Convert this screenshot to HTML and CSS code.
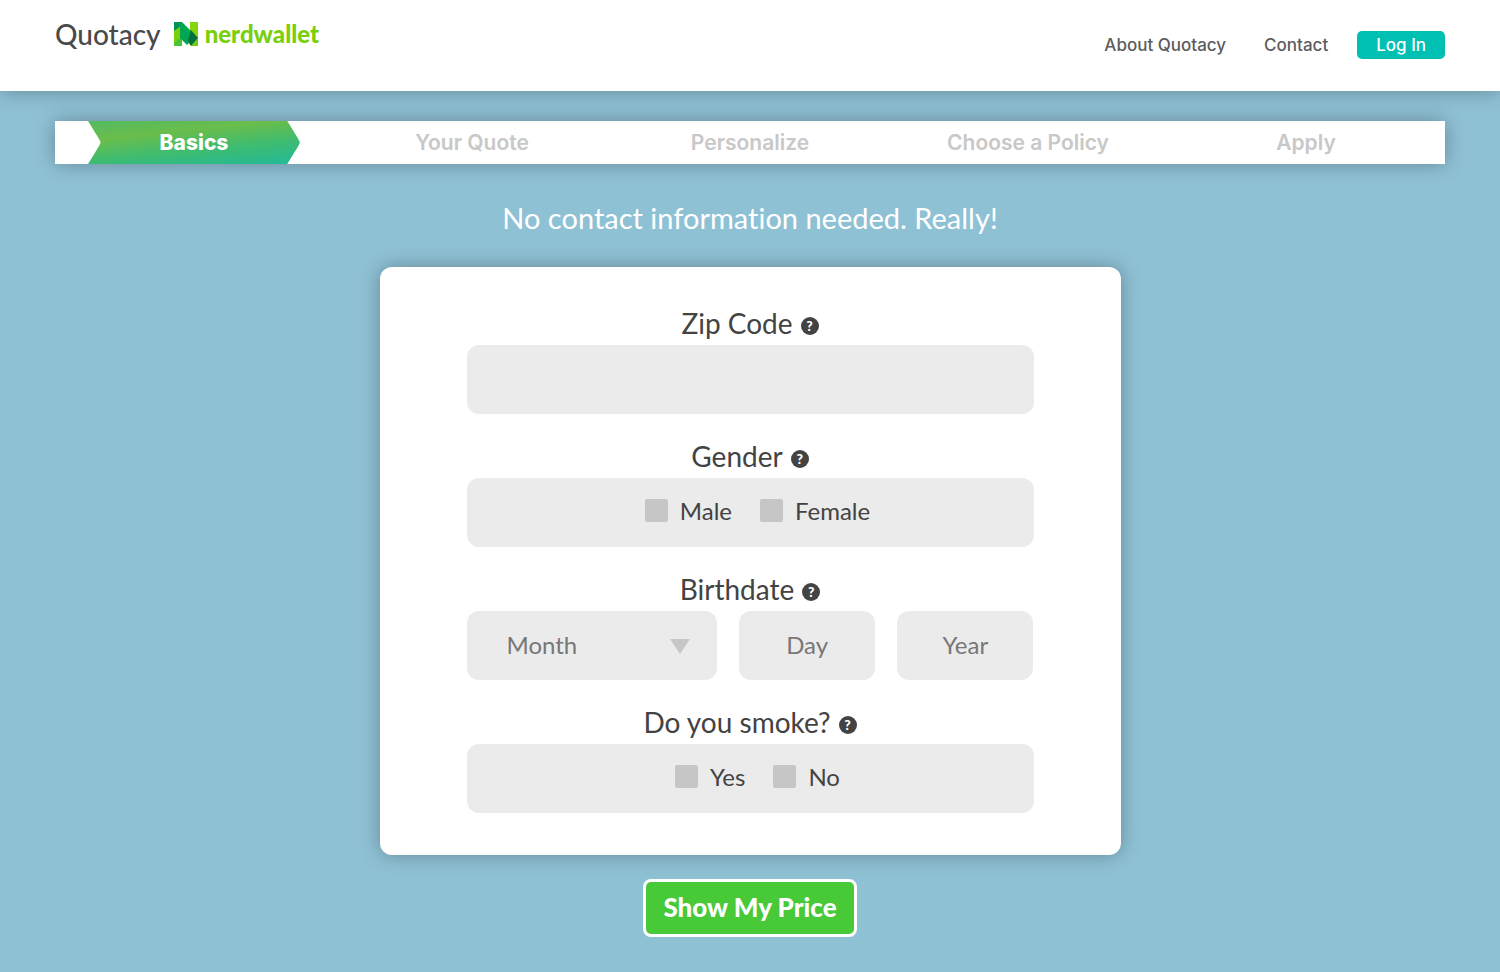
FILE: index.html
```html
<!DOCTYPE html>
<html lang="en">
<head>
  <meta charset="UTF-8" />
  <meta name="viewport" content="width=device-width, initial-scale=1" />
  <title>Quotacy - Basics</title>
  <link rel="stylesheet" href="styles.css">
</head>
<body>
  <header class="site-header">
    <a href="#" class="logo">
      <span class="logo-quotacy">Quotacy</span>
      <svg class="logo-mark" viewBox="0 0 24 24" aria-hidden="true">
        <path d="M0 0h8v24H0z" fill="#78cf0a" />
        <path d="M0 0h8v3L0 9z" fill="#00945a" />
        <path d="M0 24v-3l8-7v10z" fill="#4cc336" />
        <path d="M16 0h8v24h-8z" fill="#84d60b" />
        <path d="M8 0l9 9v10l-4 4-5-5-2-2V3z" fill="#00a651" />
        <path d="M17 8l7 8-6 7h-2l-2-5z" fill="#00703f" />
        <path d="M24 16v8h-7z" fill="#6ccb1c" />
      </svg>
      <span class="logo-nerdwallet">nerdwallet</span>
    </a>
    <nav class="main-nav">
      <a href="#">About Quotacy</a>
      <a href="#">Contact</a>
      <a href="#" class="login-link">Log In</a>
    </nav>
  </header>

  <main>
    <ol class="steps">
      <li class="active"><span>Basics</span></li>
      <li>Your Quote</li>
      <li>Personalize</li>
      <li>Choose a Policy</li>
      <li>Apply</li>
    </ol>

    <h1>No contact information needed. Really!</h1>

    <form id="quoteForm">
      <div class="card">
        <div class="field">
          <div class="field-title">
            <label for="zipInput">Zip Code</label>
            <button type="button" class="help" aria-label="Help with zip code">?</button>
          </div>
          <input type="text" id="zipInput" name="zip" class="box" />
        </div>

        <div class="field" role="radiogroup" aria-labelledby="genderTitle">
          <div class="field-title">
            <span id="genderTitle">Gender</span>
            <button type="button" class="help" aria-label="Help with gender">?</button>
          </div>
          <div class="box choices">
            <label><input type="radio" name="gender" value="male" /> Male</label>
            <label><input type="radio" name="gender" value="female" /> Female</label>
          </div>
        </div>

        <div class="field">
          <div class="field-title">
            <label for="monthSelect">Birthdate</label>
            <button type="button" class="help" aria-label="Help with birthdate">?</button>
          </div>
          <div class="birthdate">
            <div class="select-wrap">
              <select id="monthSelect" name="month" class="box">
                <option value="">Month</option>
                <option>January</option>
                <option>February</option>
                <option>March</option>
                <option>April</option>
                <option>May</option>
                <option>June</option>
                <option>July</option>
                <option>August</option>
                <option>September</option>
                <option>October</option>
                <option>November</option>
                <option>December</option>
              </select>
            </div>
            <input type="text" name="day" class="box" placeholder="Day" aria-label="Day" />
            <input type="text" name="year" class="box" placeholder="Year" aria-label="Year" />
          </div>
        </div>

        <div class="field" role="radiogroup" aria-labelledby="smokeTitle">
          <div class="field-title">
            <span id="smokeTitle">Do you smoke?</span>
            <button type="button" class="help" aria-label="Help with smoking">?</button>
          </div>
          <div class="box choices">
            <label><input type="radio" name="smoke" value="yes" /> Yes</label>
            <label><input type="radio" name="smoke" value="no" /> No</label>
          </div>
        </div>
      </div>

      <button type="submit" class="submit">Show My Price</button>
    </form>
  </main>
</body>
</html>
```
FILE: styles.css
```css
* {
  box-sizing: border-box;
}
body {
  margin: 0;
  min-height: 100vh;
  background: #8fc1d5;
  color: #434343;
  font-family: Lato, sans-serif;
  font-variant-ligatures: none;
}
a {
  text-decoration: none;
}

/* header */
.site-header {
  display: flex;
  justify-content: space-between;
  align-items: flex-start;
  padding: 16px 55px 32px;
  background: #fff;
  box-shadow: 0 0 20px rgba(0, 0, 0, 0.3);
}
.logo {
  display: flex;
  align-items: center;
  line-height: 36px;
}
.logo-quotacy {
  color: #4a4a4c;
  font-size: 28px;
  font-weight: 500;
}
.logo-mark {
  width: 24px;
  height: 24px;
  margin: 0 7px 0 13px;
}
.logo-nerdwallet {
  color: #78cf0a;
  font-size: 24px;
  font-weight: 900;
}
.main-nav {
  display: flex;
  align-items: center;
  padding-top: 15px;
  font-family: Inter, sans-serif;
  font-size: 17px;
  font-weight: 500;
  line-height: 28px;
}
.main-nav a {
  margin-left: 38px;
  color: #5c5c5c;
}
.main-nav .login-link {
  margin-left: 29px;
  padding: 0 19px;
  border-radius: 5px;
  background: #00bfb3;
  color: #fff;
}

/* progress steps */
.steps {
  display: grid;
  grid-template-columns: repeat(5, 1fr);
  margin: 30px 55px 0;
  padding: 0;
  list-style: none;
  background: #fff;
  box-shadow: 0 0 20px rgba(0, 0, 0, 0.3);
  color: #c8c8c8;
  font-family: Inter, sans-serif;
  font-size: 21px;
  font-weight: 600;
  line-height: 43px;
  text-align: center;
}
.steps .active {
  padding: 0 33px;
  color: #fff;
  font-weight: 800;
}
.steps .active span {
  display: block;
  background: linear-gradient(174deg, #52bb62 0, #6abd4b 30%, #3fbc70 62%, #22b998 100%);
  clip-path: polygon(0 0, 94% 0, 99% 40%, 100% 50%, 99% 60%, 94% 100%, 0 100%, 5% 60%, 6% 50%, 5% 40%);
}

h1 {
  margin: 35px 0 31px;
  color: #fff;
  font-size: 29px;
  font-weight: 400;
  line-height: 37px;
  text-align: center;
}

/* form */
#quoteForm {
  display: flex;
  flex-direction: column;
  align-items: center;
  padding: 0 20px 35px;
}
.card {
  width: 100%;
  max-width: 741px;
  padding: 38px 87px 42px;
  border-radius: 12px;
  background: #fff;
  box-shadow: 0 0 20px rgba(0, 0, 0, 0.3);
}
.field + .field {
  margin-top: 24px;
}
.field-title {
  display: flex;
  justify-content: center;
  align-items: center;
  gap: 8px;
  padding-bottom: 3px;
  font-size: 28px;
  line-height: 37px;
}
.help {
  width: 18px;
  height: 18px;
  margin-top: 5px;
  padding: 0;
  border: none;
  border-radius: 50%;
  background: #434343;
  color: #fff;
  font-family: Lato, sans-serif;
  font-size: 14px;
  font-weight: 900;
  line-height: 18px;
  cursor: pointer;
}
.box {
  display: block;
  width: 100%;
  height: 69px;
  border: none;
  border-radius: 12px;
  background: #ebebeb;
  color: #434343;
  font-family: Lato, sans-serif;
  font-size: 24px;
  text-align: center;
}
input.box,
select.box {
  padding-bottom: 3px;
}
.box::placeholder {
  color: #777;
}
.choices {
  display: flex;
  justify-content: center;
  align-items: center;
  gap: 28px;
  padding: 0 0 4px 15px;
}
.choices label {
  display: flex;
  align-items: center;
  gap: 12px;
}
.choices input {
  appearance: none;
  width: 23px;
  height: 23px;
  margin: 0;
  border-radius: 2px;
  background: #c6c6c6;
}
.choices input:checked {
  background: #47c938;
}
.birthdate {
  display: grid;
  grid-template-columns: 250fr 136fr 136fr;
  gap: 22px;
}
.select-wrap {
  position: relative;
}
.select-wrap select {
  appearance: none;
  padding: 0 40px 3px;
  color: #777;
  text-align: left;
}
.select-wrap::after {
  content: "";
  position: absolute;
  top: 28px;
  right: 27px;
  border: 10px solid transparent;
  border-top: 15px solid #c6c6c6;
  border-bottom: none;
  pointer-events: none;
}
.submit {
  margin-top: 24px;
  padding: 0 17px 2px;
  border: 3px solid #fff;
  border-radius: 8px;
  background: #47c938;
  color: #fff;
  font-family: Lato, sans-serif;
  font-size: 26px;
  font-weight: 900;
  line-height: 50px;
  cursor: pointer;
}
```
